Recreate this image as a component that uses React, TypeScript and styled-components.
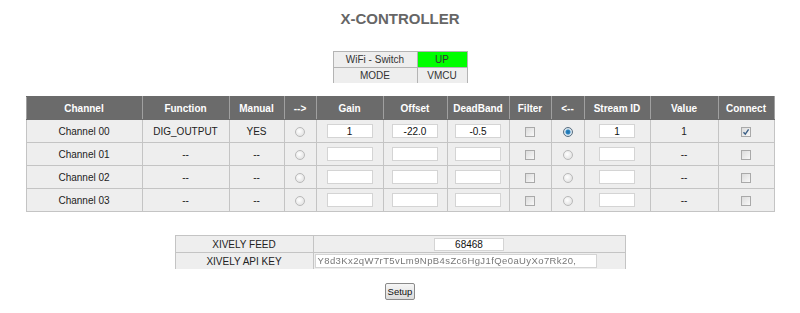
import styled, { createGlobalStyle } from "styled-components";

const GlobalStyle = createGlobalStyle`
  html, body {
    margin: 0;
    padding: 0;
    background: #ffffff;
  }
  body {
    font-family: "Liberation Sans", Arial, sans-serif;
    font-size: 10px;
    color: #222222;
  }
`;

type Channel = {
  name: string;
  func: string;
  manual: string;
  gain: string;
  offset: string;
  deadband: string;
  stream: string;
  value: string;
  active: boolean;
};

const channels: Channel[] = [
  { name: "Channel 00", func: "DIG_OUTPUT", manual: "YES", gain: "1", offset: "-22.0", deadband: "-0.5", stream: "1", value: "1", active: true },
  { name: "Channel 01", func: "--", manual: "--", gain: "", offset: "", deadband: "", stream: "", value: "--", active: false },
  { name: "Channel 02", func: "--", manual: "--", gain: "", offset: "", deadband: "", stream: "", value: "--", active: false },
  { name: "Channel 03", func: "--", manual: "--", gain: "", offset: "", deadband: "", stream: "", value: "--", active: false },
];

const columns = [
  { label: "Channel", width: 116 },
  { label: "Function", width: 87 },
  { label: "Manual", width: 55 },
  { label: "-->", width: 32 },
  { label: "Gain", width: 67 },
  { label: "Offset", width: 64 },
  { label: "DeadBand", width: 62 },
  { label: "Filter", width: 42 },
  { label: "<--", width: 33 },
  { label: "Stream ID", width: 66 },
  { label: "Value", width: 68 },
  { label: "Connect", width: 56 },
];

const Checkbox = ({ checked }: { checked?: boolean }) => (
  <CheckWrap>
    <CheckInput type="checkbox" defaultChecked={checked} />
    {checked && (
      <CheckMark width="10" height="10" viewBox="0 0 10 10">
        <path d="M2.5 5.2 L4.3 7.2 L7.6 2.4" fill="none" stroke="#3b5f86" strokeWidth="1.4" />
      </CheckMark>
    )}
  </CheckWrap>
);

const App = () => {
  return (
    <Page>
      <GlobalStyle />
      <Title>X-CONTROLLER</Title>

      <StatusTable>
        <tbody>
          <tr>
            <StatusCell $w={84}>WiFi - Switch</StatusCell>
            <StatusCell $w={50} $bg="#00ff00">UP</StatusCell>
          </tr>
          <tr>
            <StatusCell $w={84}>MODE</StatusCell>
            <StatusCell $w={50}>VMCU</StatusCell>
          </tr>
        </tbody>
      </StatusTable>

      <ChannelTable>
        <colgroup>
          {columns.map((c) => (
            <col key={c.label} style={{ width: c.width }} />
          ))}
        </colgroup>
        <thead>
          <tr>
            {columns.map((c) => (
              <HeadCell key={c.label}>{c.label}</HeadCell>
            ))}
          </tr>
        </thead>
        <tbody>
          {channels.map((ch) => (
            <tr key={ch.name}>
              <Cell>{ch.name}</Cell>
              <Cell>{ch.func}</Cell>
              <Cell>{ch.manual}</Cell>
              <Cell>
                <Radio type="radio" name="out" />
              </Cell>
              <Cell>
                <TextBox defaultValue={ch.gain} />
              </Cell>
              <Cell>
                <TextBox defaultValue={ch.offset} />
              </Cell>
              <Cell>
                <TextBox defaultValue={ch.deadband} />
              </Cell>
              <Cell>
                <Checkbox />
              </Cell>
              <Cell>
                <Radio type="radio" name="in" defaultChecked={ch.active} />
              </Cell>
              <Cell>
                <TextBox $w={36} defaultValue={ch.stream} />
              </Cell>
              <Cell>{ch.value}</Cell>
              <Cell>
                <Checkbox checked={ch.active} />
              </Cell>
            </tr>
          ))}
        </tbody>
      </ChannelTable>

      <FeedTable>
        <tbody>
          <tr>
            <FeedCell $w={138}>XIVELY FEED</FeedCell>
            <FeedCell $w={312}>
              <TextBox $w={70} $h={13} defaultValue="68468" />
            </FeedCell>
          </tr>
          <tr>
            <FeedCell $w={138}>XIVELY API KEY</FeedCell>
            <FeedCell $w={312} $align="left">
              <KeyBox>
                <KeyText>Y8d3Kx2qW7rT5vLm9NpB4sZc6HgJ1fQe0aUyXo7Rk20,</KeyText>
              </KeyBox>
            </FeedCell>
          </tr>
        </tbody>
      </FeedTable>

      <SetupButton type="button">Setup</SetupButton>
    </Page>
  );
};

export default App;

const Page = styled.div`
  width: 800px;
  height: 313px;
  display: flex;
  flex-direction: column;
  align-items: center;
  padding-top: 10px;
  box-sizing: border-box;
`;

const Title = styled.h1`
  margin: 0;
  font-size: 15px;
  line-height: 18px;
  font-weight: bold;
  color: #666666;
`;

const StatusTable = styled.table`
  margin-top: 23px;
  border-collapse: collapse;
  border-spacing: 0;
`;

const StatusCell = styled.td<{ $w: number; $bg?: string }>`
  width: ${(p) => p.$w - 1}px;
  height: 15px;
  padding: 0;
  border: 1px solid #b4b4b4;
  border-bottom: none;
  background: ${(p) => p.$bg || "#eeeeee"};
  color: #333333;
  text-align: center;
  vertical-align: middle;
  line-height: 14px;
`;

const ChannelTable = styled.table`
  margin-top: 13px;
  width: 748px;
  table-layout: fixed;
  border-collapse: collapse;
`;

const HeadCell = styled.th`
  height: 22px;
  padding: 0;
  background: #6b6b6b;
  color: #ffffff;
  font-weight: bold;
  font-size: 10px;
  text-align: center;
  border: 1px solid #a0a0a0;
  border-top-color: #6b6b6b;
  border-bottom-color: #6b6b6b;
`;

const Cell = styled.td`
  height: 22px;
  padding: 0;
  background: #eeeeee;
  border: 1px solid #c4c4c4;
  text-align: center;
  vertical-align: middle;
  color: #222222;
`;

const TextBox = styled.input<{ $w?: number; $h?: number }>`
  box-sizing: border-box;
  width: ${(p) => p.$w || 46}px;
  height: ${(p) => p.$h || 14}px;
  margin: 0;
  padding: 0;
  border: 1px solid #d4d4d4;
  background: #ffffff;
  font-family: "Liberation Sans", Arial, sans-serif;
  font-size: 10px;
  color: #111111;
  text-align: center;
  vertical-align: middle;
  outline: none;
`;

const Radio = styled.input`
  appearance: none;
  box-sizing: border-box;
  width: 10px;
  height: 10px;
  margin: 0;
  border: 1px solid #b9b9b9;
  border-radius: 50%;
  background: radial-gradient(circle at 40% 40%, #ffffff 0, #e2e2e2 80%);
  vertical-align: middle;
  &:checked {
    border-color: #5a6e80;
    background: radial-gradient(circle, #1e6ea8 0, #2a86c4 2px, #d8e6f0 3px, #c8d6e0 100%);
  }
`;

const CheckWrap = styled.span`
  position: relative;
  display: inline-block;
  width: 10px;
  height: 10px;
  vertical-align: middle;
`;

const CheckInput = styled.input`
  appearance: none;
  box-sizing: border-box;
  display: block;
  width: 10px;
  height: 10px;
  margin: 0;
  border: 1px solid #a9a9a9;
  background: linear-gradient(135deg, #dcdcdc, #f8f8f8);
`;

const CheckMark = styled.svg`
  position: absolute;
  left: 0;
  top: 0;
  pointer-events: none;
`;

const FeedTable = styled.table`
  margin-top: 23px;
  border-collapse: collapse;
  border-spacing: 0;
`;

const FeedCell = styled.td<{ $w: number; $align?: string }>`
  width: ${(p) => p.$w - 1}px;
  height: 16px;
  padding: 0;
  border: 1px solid #c4c4c4;
  border-bottom: none;
  background: #eeeeee;
  color: #222222;
  text-align: ${(p) => p.$align || "center"};
  vertical-align: middle;
`;

const KeyBox = styled.div`
  box-sizing: border-box;
  width: 282px;
  height: 14px;
  margin-left: 1px;
  border: 1px solid #d4d4d4;
  background: #ffffff;
  overflow: hidden;
  white-space: nowrap;
  line-height: 12px;
  padding-left: 2px;
`;

const KeyText = styled.span`
  font-size: 9.5px;
  letter-spacing: 0.4px;
  color: #777777;
  filter: blur(0.5px);
`;

const SetupButton = styled.button`
  margin-top: 14px;
  box-sizing: border-box;
  width: 30px;
  height: 17px;
  padding: 0;
  border: 1px solid #8a8a8a;
  border-radius: 2px;
  background: linear-gradient(#f6f6f6, #dcdcdc);
  font-family: "Liberation Sans", Arial, sans-serif;
  font-size: 9.5px;
  color: #111111;
`;
